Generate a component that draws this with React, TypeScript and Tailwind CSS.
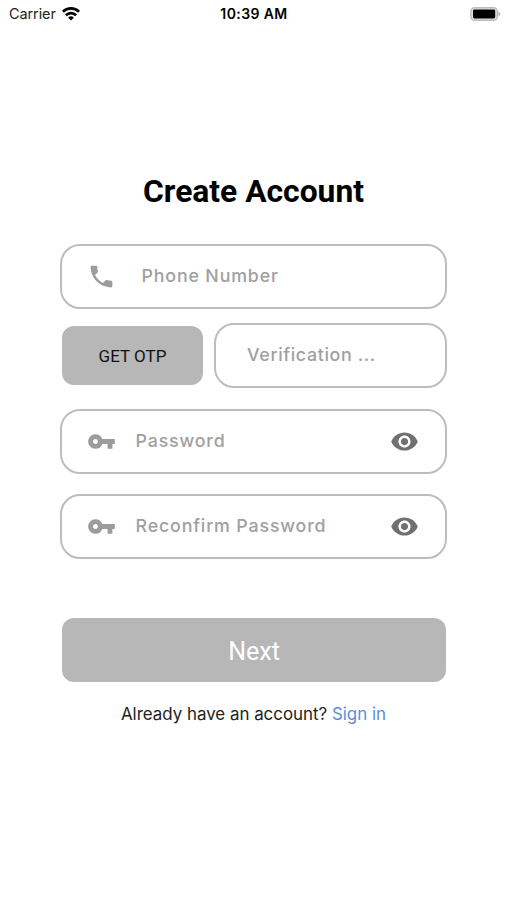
import React, { useState } from 'react';
import { MdPhone, MdVisibility, MdVisibilityOff, MdVpnKey } from 'react-icons/md';

const StatusBar: React.FC = () => (
  <div className="grid grid-cols-3 items-center h-[27px] pl-[9px] pr-[6px] text-black font-[Inter,sans-serif]">
    <div className="flex items-center gap-[6px]">
      <span className="text-[14.5px] tracking-[-0.1px] text-[#222]">Carrier</span>
      <svg width="18" height="14" viewBox="0 0 18 14" fill="none" stroke="currentColor" strokeWidth="2.7">
        <path d="M0.9 4.7a11.5 11.5 0 0 1 16.2 0" />
        <path d="M3.9 8.3a7.2 7.2 0 0 1 10.2 0" />
        <path d="M9 13.6L6.1 10.7a4.1 4.1 0 0 1 5.8 0z" fill="currentColor" stroke="none" />
      </svg>
    </div>
    <span className="text-center text-[14px] font-semibold tracking-[0.4px] -ml-[2px]">10:39 AM</span>
    <svg className="justify-self-end" width="31" height="14" viewBox="0 0 31 14">
      <rect x="0.9" y="0.7" width="26.4" height="12.6" rx="3.6" fill="#e2e2e2" stroke="#bcbcbc" strokeWidth="1.4" />
      <rect x="3" y="2.5" width="22.2" height="9" rx="1.4" fill="#000" />
      <path d="M28.4 4.6c2.6 1 2.6 3.8 0 4.8z" fill="#b5b5b5" />
    </svg>
  </div>
);

interface PasswordFieldProps {
  placeholder: string;
}

const PasswordField: React.FC<PasswordFieldProps> = ({ placeholder }) => {
  const [visible, setVisible] = useState(false);

  return (
    <div className="flex items-center w-full h-[65px] pl-[24.5px] pr-[26.5px] border-2 border-[#bdbdbd] rounded-[20px]">
      <MdVpnKey size={29} className="shrink-0 text-[#9c9c9c]" />
      <input
        type={visible ? 'text' : 'password'}
        placeholder={placeholder}
        className="flex-1 min-w-0 ml-[20px] text-[17.8px] font-medium tracking-[0.85px] placeholder:text-[#a0a0a0] focus:outline-none"
      />
      <button onClick={() => setVisible(!visible)} className="shrink-0 text-[#707070]">
        {visible ? <MdVisibilityOff size={29} /> : <MdVisibility size={29} />}
      </button>
    </div>
  );
};

const App: React.FC = () => {
  return (
    <div className="w-full h-screen overflow-hidden bg-white font-[Inter,sans-serif]">
      <StatusBar />

      <div className="w-[387px] ml-[60px] pt-[142px]">
        <h1 className="h-[44px] leading-[44px] text-center text-[31.8px] font-bold text-black font-[Roboto,sans-serif]">
          Create Account
        </h1>

        <div className="flex items-center w-full h-[65px] mt-[31px] pl-[24.5px] border-2 border-[#bdbdbd] rounded-[20px]">
          <MdPhone size={29} className="shrink-0 text-[#9c9c9c]" />
          <input
            type="tel"
            placeholder="Phone Number"
            className="flex-1 min-w-0 ml-[26px] pb-[1px] text-[17.8px] font-medium tracking-[0.85px] placeholder:text-[#a0a0a0] focus:outline-none"
          />
        </div>

        <div className="flex items-center h-[65px] mt-[14px]">
          <button className="w-[141px] h-[59px] ml-[2px] pt-[2px] rounded-[12px] bg-[#b7b7b7] text-[17px] text-[#111] font-[Roboto,sans-serif]">
            GET OTP
          </button>
          <div className="flex items-center flex-1 h-full ml-[11px] pl-[31px] border-2 border-[#bdbdbd] rounded-[20px]">
            <input
              type="text"
              placeholder="Verification ..."
              className="w-full text-[17.8px] font-medium tracking-[0.65px] placeholder:text-[#a0a0a0] focus:outline-none"
            />
          </div>
        </div>

        <div className="mt-[21px] space-y-[20px]">
          <PasswordField placeholder="Password" />
          <PasswordField placeholder="Reconfirm Password" />
        </div>

        <button className="block w-[384px] h-[64px] mt-[59px] ml-[2px] pt-[3px] rounded-[12px] bg-[#b7b7b7] text-[25px] text-white font-[Roboto,sans-serif]">
          Next
        </button>

        <p className="mt-[20px] text-center text-[16.9px] leading-[24px] text-[#222]">
          Already have an account? <a href="#" className="text-[#5a8fd6]">Sign in</a>
        </p>
      </div>
    </div>
  );
};

export default App;
